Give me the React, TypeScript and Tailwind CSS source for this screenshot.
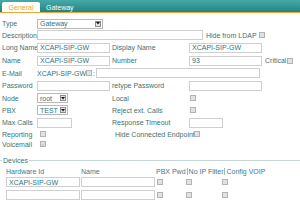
import React from 'react';

const LABEL = 'text-[#3d7272]';

function Field({ w, value = '', className = '' }: { w: number; value?: string; className?: string }) {
  return (
    <div
      className={`flex h-[10px] shrink-0 items-center border border-[#cfcfcf] bg-white px-[2px] text-[7px] leading-none text-[#2e7282] ${className}`}
      style={{ width: w }}
    >
      {value}
    </div>
  );
}

function Select({ w, value }: { w: number; value: string }) {
  return (
    <div
      className="flex h-[10px] shrink-0 items-center justify-between border border-[#b9b9b9] bg-white pl-[2px] pr-[1px] text-[7px] leading-none text-[#2e7282]"
      style={{ width: w }}
    >
      <span>{value}</span>
      <span className="flex h-[6px] w-[6px] items-center justify-center border border-[#8a8a8a] bg-[#e4e4e4]">
        <svg width="4" height="3" viewBox="0 0 4 3">
          <path d="M0 0h4L2 2.5z" fill="#111" />
        </svg>
      </span>
    </div>
  );
}

function Check({ checked = false }: { checked?: boolean }) {
  return (
    <span className="flex h-[6px] w-[6px] shrink-0 items-center justify-center border border-[#b3b3b3] bg-[#e2e2e2]">
      {checked && (
        <svg width="5" height="5" viewBox="0 0 5 5">
          <path d="M0.6 2.6l1.3 1.3L4.4 1" stroke="#a9a9a9" strokeWidth="0.9" fill="none" />
        </svg>
      )}
    </span>
  );
}

function Label({ w, children }: { w: number; children: React.ReactNode }) {
  return (
    <span className={`shrink-0 whitespace-nowrap ${LABEL}`} style={{ width: w }}>
      {children}
    </span>
  );
}

export default function App() {
  return (
    <div className="h-[219px] w-[300px] overflow-hidden bg-white text-[7px] leading-none" style={{ fontFamily: '"Liberation Sans", Arial, sans-serif' }}>
      {/* tab bar */}
      <div className="flex h-[12px] items-end bg-gradient-to-b from-[#46aaa8] to-[#1f8584] pl-[2px]">
        <div className="flex h-[10px] w-[38px] items-center justify-center rounded-t-[2px] bg-white text-[#f2a531]">General</div>
        <div className="flex h-[10px] items-center pl-[6px] text-white">Gateway</div>
      </div>
      <div className="h-[1px] bg-[#f0a43a]" />

      <div className="flex flex-col pl-[2px] pt-[5px]">
        <div className="flex h-[11px] items-center">
          <Label w={35}>Type</Label>
          <Select w={66} value="Gateway" />
        </div>
        <div className="flex h-[12px] items-center">
          <Label w={35}>Description</Label>
          <Field w={166} />
          <span className={`ml-[3px] ${LABEL}`}>Hide from LDAP</span>
          <span className="ml-[2px]"><Check /></span>
        </div>
        <div className="flex h-[13px] items-center">
          <Label w={35}>Long Name</Label>
          <Field w={73} value="XCAPI-SIP-GW" />
          <Label w={79}><span className="pl-[2px]">Display Name</span></Label>
          <Field w={73} value="XCAPI-SIP-GW" />
        </div>
        <div className="flex h-[13px] items-center">
          <Label w={35}>Name</Label>
          <Field w={73} value="XCAPI-SIP-GW" />
          <Label w={79}><span className="pl-[2px]">Number</span></Label>
          <Field w={73} value="93" />
          <span className={`ml-[3px] ${LABEL}`}>Critical</span>
          <span className="ml-[1px]"><Check /></span>
        </div>
        <div className="flex h-[12px] items-center">
          <Label w={35}>E-Mail</Label>
          <span className="text-[#2e7282]">XCAPI-SIP-GW</span>
          <Check />
          <span className="mx-[1px] text-[#2e7282]">:</span>
          <Field w={164} />
        </div>
        <div className="flex h-[13px] items-center">
          <Label w={35}>Password</Label>
          <Field w={73} />
          <Label w={79}><span className="pl-[2px]">retype Password</span></Label>
          <Field w={73} />
        </div>
        <div className="flex h-[12px] items-center">
          <Label w={35}>Node</Label>
          <Select w={31} value="root" />
          <span className="w-[44px]" />
          <Label w={78}>Local</Label>
          <Check />
        </div>
        <div className="flex h-[12px] items-center">
          <Label w={35}>PBX</Label>
          <Select w={31} value="TEST" />
          <span className="w-[44px]" />
          <Label w={78}>Reject ext. Calls</Label>
          <Check />
        </div>
        <div className="flex h-[13px] items-center">
          <Label w={35}>Max Calls</Label>
          <Field w={35} />
          <span className="w-[40px]" />
          <Label w={77}>Response Timeout</Label>
          <Field w={34} />
        </div>
        <div className="flex h-[10px] items-center">
          <Label w={38}>Reporting</Label>
          <Check />
          <span className="w-[69px]" />
          <Label w={79}>Hide Connected Endpoint</Label>
          <Check />
        </div>
        <div className="flex h-[10px] items-center">
          <Label w={38}>Voicemail</Label>
          <Check checked />
        </div>
      </div>

      {/* devices fieldset */}
      <div className="mt-[8px] flex items-center">
        <span className="h-[1px] w-[2px] bg-[#c5d6d6]" />
        <span className={`px-[1px] ${LABEL}`}>Devices</span>
        <span className="h-[1px] flex-1 bg-[#c5d6d6]" />
      </div>
      <div className="flex flex-col pl-[6px] pt-[4px]">
        <div className="flex h-[6px] items-center text-[#3d7a8a]">
          <span className="w-[75px]">Hardware Id</span>
          <span className="w-[75px]">Name</span>
          <span className="border-r border-[#9cbcbc] pr-[1px]">PBX Pwd</span>
          <span className="border-r border-[#9cbcbc] px-[1px]">No IP Filter</span>
          <span className="px-[1px]">Config VOIP</span>
        </div>
        {['XCAPI-SIP-GW', ''].map((v, i) => (
          <div key={i} className="mt-[3px] flex h-[10px] items-center">
            <Field w={74} value={v} />
            <span className="w-[1px]" />
            <Field w={74} />
            <span className="w-[2px]" />
            <Check />
            <span className="w-[23px]" />
            <Check />
            <span className="w-[30px]" />
            <Check />
          </div>
        ))}
      </div>
    </div>
  );
}
